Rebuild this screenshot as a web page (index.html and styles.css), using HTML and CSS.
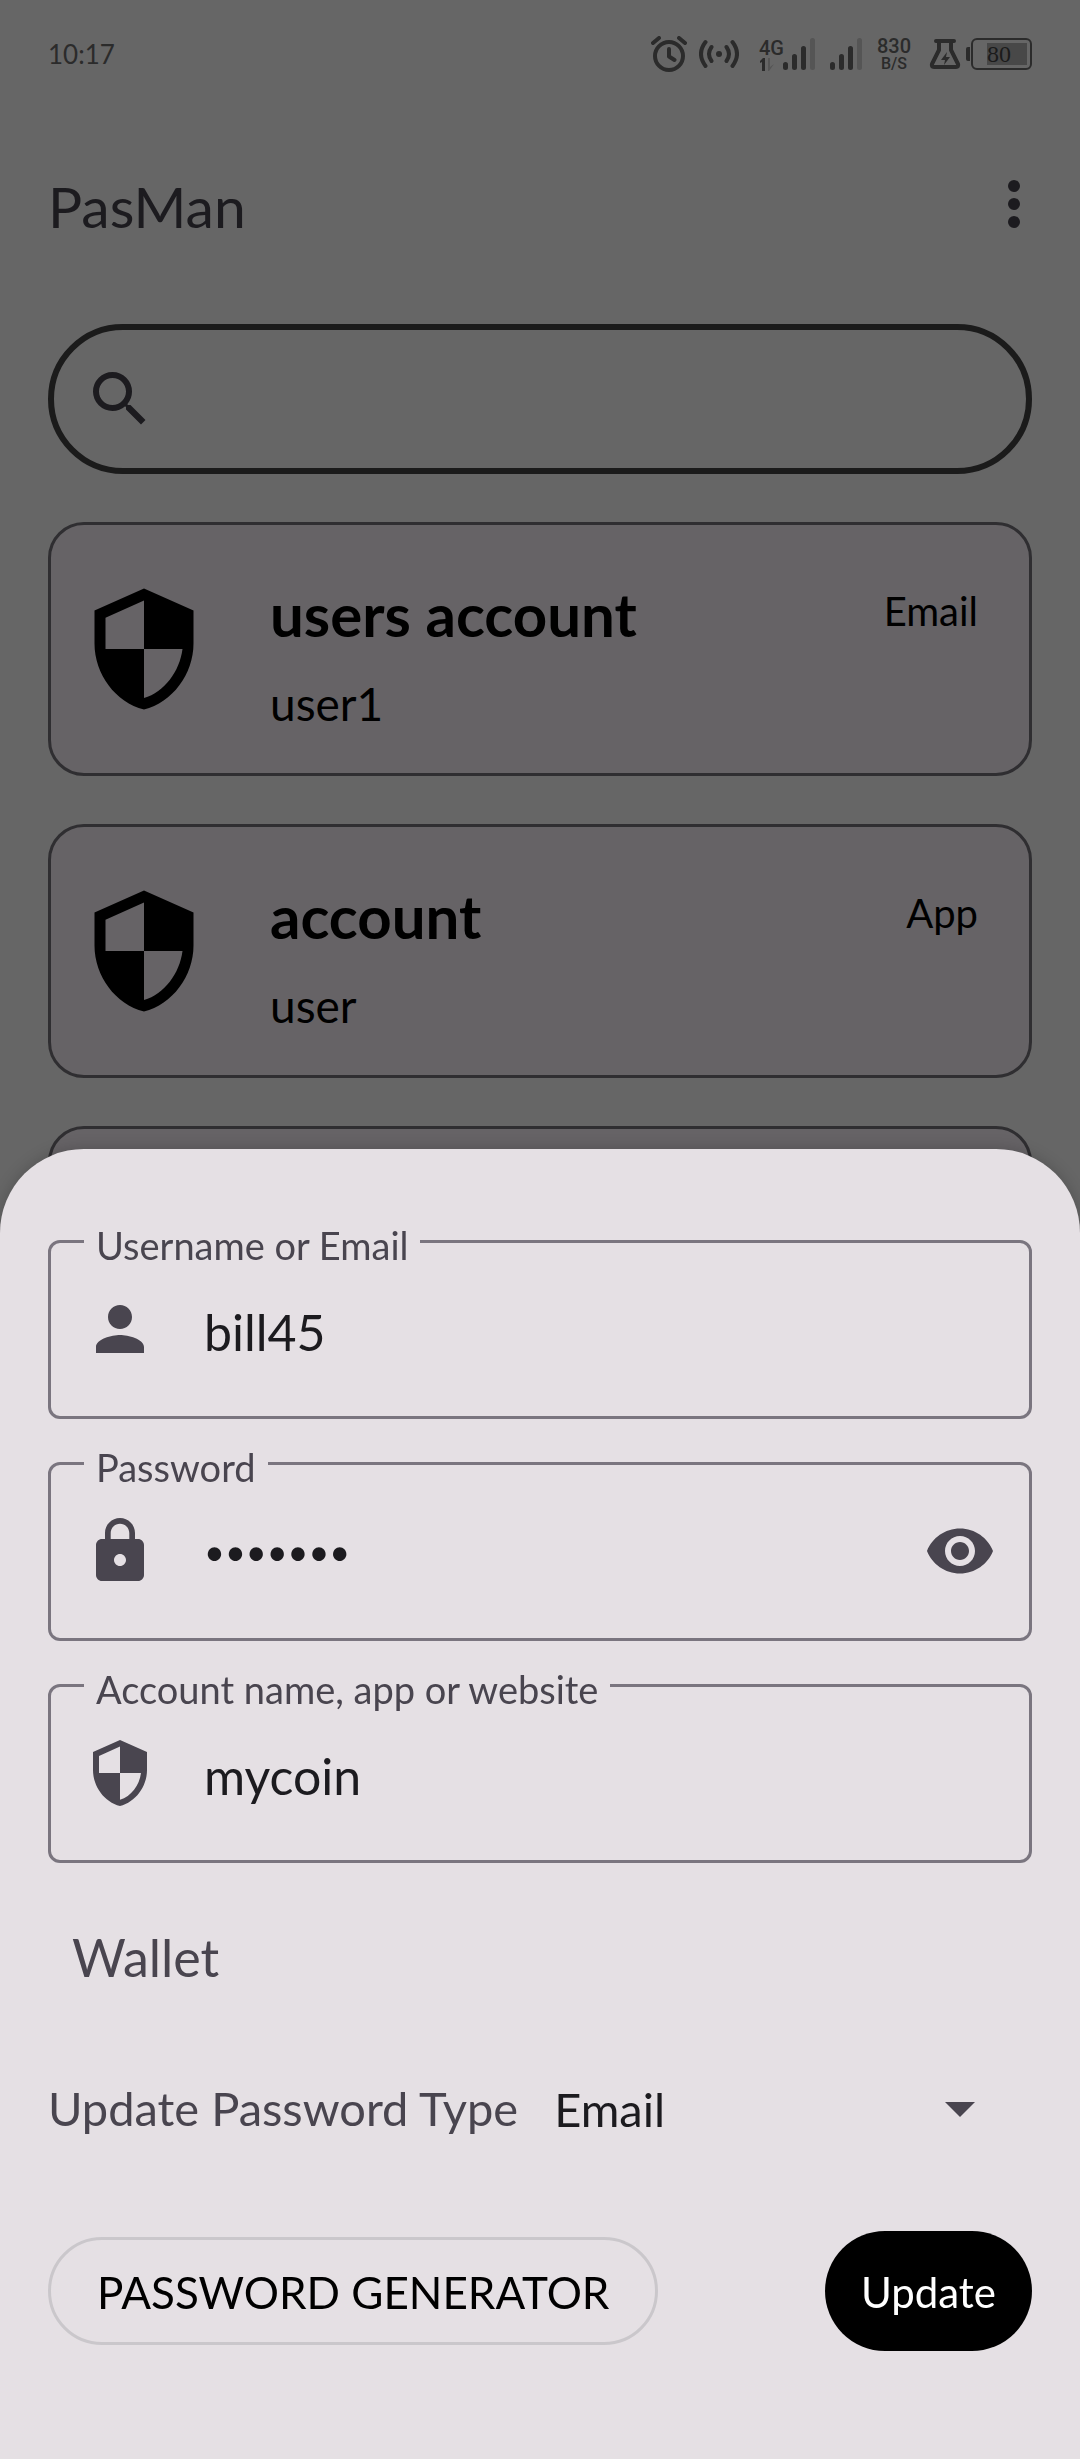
FILE: index.html
```html
<!DOCTYPE html>
<html lang="en">
<head>
  <meta charset="utf-8">
  <meta name="viewport" content="width=device-width, initial-scale=1">
  <title>PasMan</title>
  <link rel="stylesheet" href="styles.css">
</head>
<body>
  <svg width="0" height="0" hidden>
    <symbol id="shield" viewBox="0 0 24 24">
      <path d="M12 1 3 5v6c0 5.550 3.840 10.740 9 12 5.160-1.260 9-6.450 9-12V5l-9-4zm0 10.990h7c-.53 4.120-3.280 7.790-7 8.940V12H5V6.300l7-3.110v8.800z"/>
    </symbol>
  </svg>

  <div class="app">
    <div class="status">
      <time class="clock">10:17</time>
      <div class="status-icons">
        <svg class="alarm" viewBox="0 0 36 36" fill="none" stroke="currentColor" stroke-width="4" stroke-linecap="round" stroke-linejoin="round">
          <circle cx="18" cy="20" r="14"/>
          <path d="M18 13v7.500l5.500 3.500M2 7l6-5M34 7l-6-5"/>
        </svg>
        <svg class="hotspot" viewBox="0 0 40 30" fill="none" stroke="currentColor" stroke-width="4" stroke-linecap="round">
          <circle cx="20" cy="15" r="3" fill="currentColor" stroke="none"/>
          <path d="M12.500 8q-5 7 0 14M27.500 8q5 7 0 14M6.500 3q-9 12 0 24M33.500 3q9 12 0 24"/>
        </svg>
        <div class="network">
          <span class="network-type">4G</span>
          <svg class="traffic" viewBox="0 0 16 13">
            <path d="M1 3 4 0h2v13H3V4L1 5z" fill="currentColor"/>
            <path d="M9 0h2v9l4-3-5 7H9z" fill="#555"/>
          </svg>
        </div>
        <svg class="signal" viewBox="0 0 32 32" stroke="currentColor" stroke-width="5" stroke-linecap="round">
          <path d="M2.500 26.500v3M11.500 18.500v11M20.500 10.500v19"/>
          <path d="M29.500 2.500v27" stroke="#555"/>
        </svg>
        <svg class="signal second" viewBox="0 0 32 32" stroke="currentColor" stroke-width="5" stroke-linecap="round">
          <path d="M2.500 26.500v3M11.500 18.500v11M20.500 10.500v19"/>
          <path d="M29.500 2.500v27" stroke="#555"/>
        </svg>
        <div class="speed"><span>830</span><span class="unit">B/S</span></div>
        <svg class="flask" viewBox="0 0 32 32" fill="none" stroke="currentColor" stroke-width="4" stroke-linecap="round" stroke-linejoin="round">
          <path d="M7 3h18M10 4v8L3 26q-1 3 2 3h22q3 0 2-3l-7-14V4"/>
          <path d="m18 14-6 8h4l-1 5 6-8h-4z" fill="currentColor" stroke="none"/>
        </svg>
        <div class="battery"><span class="battery-level">80</span></div>
      </div>
    </div>

    <header class="toolbar">
      <h1>PasMan</h1>
      <button class="icon-button" type="button" aria-label="More options">
        <svg class="icon" viewBox="0 0 24 24"><circle cx="12" cy="6" r="2"/><circle cx="12" cy="12" r="2"/><circle cx="12" cy="18" r="2"/></svg>
      </button>
    </header>

    <main class="content">
      <div class="search">
        <svg class="icon" viewBox="0 0 24 24"><path d="M15.500 14h-.79l-.28-.27A6.471 6.471 0 0 0 16 9.500 6.500 6.500 0 1 0 9.500 16c1.610 0 3.090-.59 4.230-1.570l.27.28v.79l5 4.990L20.490 19l-4.990-5zm-6 0C7.010 14 5 11.990 5 9.500S7.010 5 9.500 5 14 7.010 14 9.500 11.990 14 9.500 14z"/></svg>
        <input type="search" aria-label="Search accounts">
      </div>
      <article class="card">
        <svg class="card-icon"><use href="#shield"/></svg>
        <div class="card-text"><h2>users account</h2><p>user1</p></div>
        <span class="card-type">Email</span>
      </article>
      <article class="card">
        <svg class="card-icon"><use href="#shield"/></svg>
        <div class="card-text"><h2>account</h2><p>user</p></div>
        <span class="card-type">App</span>
      </article>
      <article class="card"></article>
    </main>
  </div>

  <form class="sheet">
    <div class="fields">
      <fieldset class="field">
        <legend><label for="username">Username or Email</label></legend>
        <div class="field-row">
          <svg class="icon" viewBox="0 0 24 24"><path d="M12 12c2.210 0 4-1.790 4-4s-1.790-4-4-4-4 1.790-4 4 1.790 4 4 4zm0 2c-2.670 0-8 1.340-8 4v2h16v-2c0-2.660-5.330-4-8-4z"/></svg>
          <input id="username" type="text" value="bill45">
        </div>
      </fieldset>
      <fieldset class="field">
        <legend><label for="password">Password</label></legend>
        <div class="field-row">
          <svg class="icon" viewBox="0 0 24 24"><path d="M18 8h-1V6c0-2.760-2.240-5-5-5S7 3.240 7 6v2H6c-1.100 0-2 .9-2 2v10c0 1.100.9 2 2 2h12c1.100 0 2-.9 2-2V10c0-1.100-.9-2-2-2zm-6 9c-1.100 0-2-.9-2-2s.9-2 2-2 2 .9 2 2-.9 2-2 2zm3.100-9H8.900V6c0-1.710 1.390-3.100 3.100-3.100s3.100 1.390 3.100 3.100v2z"/></svg>
          <input id="password" type="password" value="mypass1">
          <button class="icon-button" type="button" aria-label="Show password">
            <svg class="icon" viewBox="0 0 24 24"><path d="M12 4.500C7 4.500 2.730 7.610 1 12c1.730 4.390 6 7.500 11 7.500s9.270-3.110 11-7.500c-1.730-4.390-6-7.500-11-7.500zM12 17c-2.760 0-5-2.240-5-5s2.240-5 5-5 5 2.240 5 5-2.240 5-5 5zm0-8c-1.660 0-3 1.340-3 3s1.340 3 3 3 3-1.340 3-3-1.340-3-3-3z"/></svg>
          </button>
        </div>
      </fieldset>
      <fieldset class="field">
        <legend><label for="account">Account name, app or website</label></legend>
        <div class="field-row">
          <svg class="icon"><use href="#shield"/></svg>
          <input id="account" type="text" value="mycoin">
        </div>
      </fieldset>
    </div>
    <p class="current-type">Wallet</p>
    <div class="type-row">
      <label for="type">Update Password Type</label>
      <div class="select">
        <select id="type"><option>Email</option><option>App</option><option>Wallet</option></select>
        <svg class="icon" viewBox="0 0 24 24"><path d="m7 10 5 5 5-5z"/></svg>
      </div>
    </div>
    <div class="actions">
      <button class="outlined" type="button">PASSWORD GENERATOR</button>
      <button class="filled" type="submit">Update</button>
    </div>
  </form>
</body>
</html>
```
FILE: styles.css
```css
* { box-sizing: border-box; }

body {
  margin: 0;
  background: #666;
  color: #1c1b1f;
  font-family: Lato, "Liberation Sans", sans-serif;
}

h1, h2, p { margin: 0; font-weight: 400; }
svg { display: block; flex: none; }
input, select, button { margin: 0; padding: 0; border: 0; background: none; color: inherit; font: inherit; }
input { flex: 1; min-width: 0; outline: 0; }

.icon { width: 72px; height: 72px; fill: currentColor; }
.icon-button { flex: none; }

.app { height: 100vh; overflow: hidden; }

/* Status bar */
.status {
  display: flex;
  justify-content: space-between;
  align-items: center;
  height: 108px;
  padding: 0 48px;
  color: #2b2b2b;
}
.clock { font-size: 26px; }
.status-icons { display: flex; align-items: center; font-family: Roboto, sans-serif; }
.alarm { width: 36px; height: 36px; margin-right: 12px; }
.hotspot { width: 40px; height: 30px; margin-right: 20px; }
.network { width: 24px; }
.network-type { display: block; font-size: 20px; font-weight: 500; line-height: 20px; }
.traffic { width: 16px; height: 13px; }
.signal { width: 32px; height: 32px; }
.second { margin: 0 15px; }
.speed { display: flex; flex-direction: column; align-items: center; margin-right: 18px; font-size: 20px; font-weight: 500; line-height: 20px; }
.unit { font-size: 16px; line-height: 16px; }
.flask { width: 32px; height: 32px; margin-right: 10px; }
.battery {
  position: relative;
  width: 61px;
  height: 32px;
  padding: 3px 3px 3px 14px;
  border: 2px solid currentColor;
  border-radius: 6px;
}
.battery::before {
  content: "";
  position: absolute;
  top: 7px;
  left: -7px;
  width: 4px;
  height: 14px;
  border-radius: 2px 0 0 2px;
  background: currentColor;
}
.battery-level { display: block; background: #484848; color: #1b1b1b; font: 24px/22px "Liberation Serif", serif; }

/* Main screen */
.toolbar {
  display: flex;
  justify-content: space-between;
  align-items: center;
  height: 192px;
  padding: 0 30px 0 48px;
}
.toolbar h1 { padding-top: 4px; font-size: 57px; color: #1c1b1f; }

.content { display: flex; flex-direction: column; gap: 48px; padding: 24px 48px; }
.search {
  display: flex;
  align-items: center;
  flex: none;
  height: 150px;
  padding: 0 30px;
  border: 6px solid #1b1b1b;
  border-radius: 75px;
}
.card {
  display: flex;
  align-items: center;
  flex: none;
  height: 254px;
  padding: 0 51px 0 27px;
  border: 3px solid #2f2e31;
  border-radius: 36px;
  background: #666366;
  color: #000;
}
.card-icon { width: 132px; height: 132px; }
.card-text { flex: 1; padding: 22px 0 0 60px; }
.card-text h2 { font-size: 60px; font-weight: 700; line-height: 88px; }
.card-text p { font-size: 46px; line-height: 92px; }
.card-type { align-self: flex-start; padding-top: 58px; font-size: 40px; line-height: 56px; }

/* Bottom sheet lies over the list */
.sheet {
  position: fixed;
  right: 0;
  bottom: 0;
  left: 0;
  padding: 67px 48px 108px;
  border-radius: 84px 84px 0 0;
  background: #e5e0e4;
  box-shadow: 0 0 16px rgba(0, 0, 0, 0.2);
}
.fields { display: flex; flex-direction: column; gap: 19px; }
.field {
  min-width: 0;
  margin: 0;
  padding: 26px 33px 51px;
  border: 3px solid #7a757f;
  border-radius: 12px;
  color: #49454f;
}
.field legend { padding: 8px 12px 0; font-size: 38px; line-height: 43px; }
.field-row { display: flex; align-items: center; height: 72px; }
.field input { padding: 5px 0 0 48px; color: #1c1b1f; font-size: 50px; line-height: 60px; }
.field input[type="password"] { padding-top: 0; font-size: 36px; }

.current-type { margin-top: 64px; padding-left: 24px; color: #49454f; font-size: 52px; line-height: 60px; }
.type-row { display: flex; align-items: center; margin-top: 85px; color: #49454f; font-size: 47px; }
.select { display: grid; flex: 1; align-items: center; padding-left: 36px; }
.select > * { grid-area: 1 / 1; }
.select select { height: 72px; padding-top: 2px; appearance: none; outline: 0; color: #1c1b1f; }
.select .icon { justify-self: end; margin-right: 36px; pointer-events: none; }

.actions { display: flex; justify-content: space-between; align-items: center; margin-top: 87px; }
.outlined {
  height: 108px;
  padding: 2px 46px 0;
  border: 3px solid #cac7cb;
  border-radius: 54px;
  color: #000;
  font-size: 44px;
}
.filled { height: 120px; padding: 2px 36px 0; border-radius: 60px; background: #000; color: #fff; font-size: 42px; }
```
